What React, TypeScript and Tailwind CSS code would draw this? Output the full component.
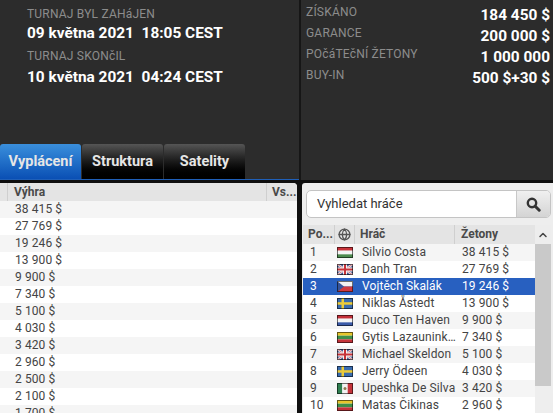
import React from 'react';
import { ChevronUp, Globe } from 'lucide-react';

type FlagCode = 'hu' | 'gb' | 'cz' | 'se' | 'nl' | 'lt' | 'mx';

const payouts = [
  '38 415 $', '27 769 $', '19 246 $', '13 900 $', '9 900 $', '7 340 $', '5 100 $',
  '4 030 $', '3 420 $', '2 960 $', '2 500 $', '2 100 $', '1 700 $',
];

const players: { name: string; flag: FlagCode; chips: string }[] = [
  { name: 'Silvio Costa', flag: 'hu', chips: '38 415 $' },
  { name: 'Danh Tran', flag: 'gb', chips: '27 769 $' },
  { name: 'Vojtěch Skalák', flag: 'cz', chips: '19 246 $' },
  { name: 'Niklas Åstedt', flag: 'se', chips: '13 900 $' },
  { name: 'Duco Ten Haven', flag: 'nl', chips: '9 900 $' },
  { name: 'Gytis Lazauninkas', flag: 'lt', chips: '7 340 $' },
  { name: 'Michael Skeldon', flag: 'gb', chips: '5 100 $' },
  { name: 'Jerry Ödeen', flag: 'se', chips: '4 030 $' },
  { name: 'Upeshka De Silva', flag: 'mx', chips: '3 420 $' },
  { name: 'Matas Čikinas', flag: 'lt', chips: '2 960 $' },
];

const stats = [
  ['ZÍSKÁNO', '184 450 $'],
  ['GARANCE', '200 000 $'],
  ['POčáTEčNÍ ŽETONY', '1 000 000'],
  ['BUY-IN', '500 $+30 $'],
];

const Flag: React.FC<{ code: FlagCode }> = ({ code }) => {
  const stripes: Record<string, string[]> = {
    hu: ['#c8333a', '#f4f4f4', '#4d8a4e'],
    nl: ['#c4303a', '#f4f4f4', '#3a5aa8'],
    lt: ['#e8c62c', '#3f8f4a', '#c4333a'],
  };
  return (
    <svg width="16" height="11" viewBox="0 0 16 11" className="block">
      {stripes[code] &&
        stripes[code].map((c, i) => (
          <rect key={i} x="0" y={(i * 11) / 3} width="16" height={11 / 3} fill={c} />
        ))}
      {code === 'cz' && (
        <>
          <rect width="16" height="5.5" fill="#f2f2f2" />
          <rect y="5.5" width="16" height="5.5" fill="#cf3a40" />
          <path d="M0 0L7 5.5L0 11Z" fill="#34549c" />
        </>
      )}
      {code === 'se' && (
        <>
          <rect width="16" height="11" fill="#3a6cae" />
          <rect x="4.5" width="2.5" height="11" fill="#eccb3a" />
          <rect y="4.2" width="16" height="2.5" fill="#eccb3a" />
        </>
      )}
      {code === 'gb' && (
        <>
          <rect width="16" height="11" fill="#4a5a94" />
          <path d="M0 0L16 11M16 0L0 11" stroke="#f2f2f2" strokeWidth="2.2" />
          <path d="M0 0L16 11M16 0L0 11" stroke="#c8404a" strokeWidth="0.7" />
          <rect x="6" width="4" height="11" fill="#f2f2f2" />
          <rect y="3.5" width="16" height="4" fill="#f2f2f2" />
          <rect x="7" width="2" height="11" fill="#c8333a" />
          <rect y="4.5" width="16" height="2" fill="#c8333a" />
        </>
      )}
      {code === 'mx' && (
        <>
          <rect width="5.3" height="11" fill="#2f7f50" />
          <rect x="5.3" width="5.4" height="11" fill="#f2f2f2" />
          <rect x="10.7" width="5.3" height="11" fill="#c4333a" />
          <circle cx="8" cy="5.5" r="1.5" fill="#8a7a50" />
        </>
      )}
      <rect x="0.5" y="0.5" width="15" height="10" fill="none" stroke="#000" strokeOpacity="0.55" />
    </svg>
  );
};

const SearchIcon = () => (
  <svg width="15" height="15" viewBox="0 0 15 15" className="block">
    <circle cx="6" cy="6" r="4.2" fill="none" stroke="#333333" strokeWidth="2.4" />
    <path d="M9.2 9.2L13.2 13.2" stroke="#333333" strokeWidth="3" strokeLinecap="round" />
  </svg>
);

const InfoLabel: React.FC<{ children: React.ReactNode }> = ({ children }) => (
  <div className="text-[12px] leading-[14px] tracking-[0.2px] text-[#8c8c8c]">{children}</div>
);

const tabClass =
  'flex h-[35px] items-center justify-center rounded-t-[3px] text-[14.5px] font-bold text-[#e6e6e6]';

export default function App() {
  return (
    <div
      className="flex h-[413px] w-[553px] flex-col overflow-hidden bg-[#0f0f0f] text-[12px]"
      style={{ fontFamily: 'Roboto, sans-serif' }}
    >
      {/* Top info */}
      <div className="flex h-[180px] shrink-0 bg-[#2c2c2c]">
        <div className="flex w-[299px] shrink-0 flex-col">
          <div className="flex-1 pl-[27px] pt-[7px]">
            <InfoLabel>TURNAJ BYL ZAHáJEN</InfoLabel>
            <div className="mt-[1px] whitespace-pre text-[15.4px] font-bold leading-[22px] text-white">
              09 května 2021  18:05 CEST
            </div>
            <div className="mt-[5px]">
              <InfoLabel>TURNAJ SKONčIL</InfoLabel>
            </div>
            <div className="mt-[3px] whitespace-pre text-[15.4px] font-bold leading-[22px] text-white">
              10 května 2021  04:24 CEST
            </div>
          </div>
          <div className="flex h-[36px] border-b border-[#1f5fb8]">
            <div className={`${tabClass} w-[81px] bg-gradient-to-b from-[#3a8fdc] to-[#0a4fb4]`}>
              Vyplácení
            </div>
            <div className={`${tabClass} ml-px w-[81px] bg-gradient-to-b from-[#555555] via-[#1a1a1a] to-black`}>
              Struktura
            </div>
            <div className={`${tabClass} ml-px w-[81px] bg-gradient-to-b from-[#555555] via-[#1a1a1a] to-black`}>
              Satelity
            </div>
          </div>
        </div>
        <div className="w-[2px] shrink-0 bg-[#161616]" />
        <div className="flex flex-1 flex-col pl-[5px] pr-[3px] pt-[5px]">
          {stats.map(([label, value]) => (
            <div key={label} className="flex h-[21px] items-start justify-between">
              <span className="text-[12px] leading-[14px] tracking-[0.2px] text-[#8c8c8c]">{label}</span>
              <span className="text-[15.4px] font-bold leading-[20px] text-white">{value}</span>
            </div>
          ))}
        </div>
      </div>

      <div className="flex min-h-0 flex-1 pt-[3px]">
        {/* Payout table */}
        <div className="w-[297px] shrink-0 overflow-hidden rounded-tr-[4px] bg-white">
          <div className="flex h-[18px] bg-[#e4e4e4] text-[12px] font-bold leading-[18px] text-[#4a4a4a]">
            <div className="w-[8px] border-r border-[#cfcfcf]" />
            <div className="flex-1 border-r border-[#cfcfcf] pl-[6px]">Výhra</div>
            <div className="w-[30px] pl-[5px]">Vs...</div>
          </div>
          {payouts.map((p, i) => (
            <div
              key={i}
              className={`h-[17px] pl-[15px] text-[12px] leading-[17px] tracking-[0.1px] text-[#444444] ${
                i % 2 === 0 ? 'bg-[#f5f5f5]' : 'bg-white'
              }`}
            >
              {p}
            </div>
          ))}
        </div>

        <div className="w-[5px] shrink-0" />

        {/* Player list */}
        <div className="flex min-w-0 flex-1 flex-col rounded-tl-[3px] bg-[#eeeeee]">
          <div className="pl-[4px] pr-[2px] pt-[7px]">
            <div className="flex h-[28px] overflow-hidden rounded-[5px] border border-[#c4c4c4] bg-white">
              <div className="flex-1 pl-[10px] text-[13px] leading-[26px] text-[#333333]">Vyhledat hráče</div>
              <div className="flex w-[34px] items-center justify-center border-l border-[#c8c8c8] bg-gradient-to-b from-[#f0f0f0] to-[#d4d4d4]">
                <SearchIcon />
              </div>
            </div>
          </div>
          <div className="mt-[7px] flex min-h-0 flex-1 pl-[1px]">
            <div className="w-[232px] shrink-0">
              <div className="flex h-[19px] bg-[#e4e4e4] text-[12px] font-bold leading-[18px] text-[#4a4a4a]">
                <div className="w-[32px] truncate border-r border-[#cfcfcf] pl-[5px]">Po...</div>
                <div className="flex w-[20px] items-center justify-center border-r border-[#cfcfcf]">
                  <Globe size={13} strokeWidth={2.4} className="text-[#555555]" />
                </div>
                <div className="w-[100px] border-r border-[#cfcfcf] pl-[5px]">Hráč</div>
                <div className="flex-1 pl-[6px]">Žetony</div>
              </div>
              {players.map((pl, i) => {
                const selected = i === 2;
                const rowClass = selected
                  ? 'bg-[#2860c0] text-white'
                  : i % 2 === 0
                    ? 'bg-[#f5f5f5] text-[#444444]'
                    : 'bg-white text-[#444444]';
                return (
                  <div
                    key={pl.name}
                    className={`flex h-[17px] items-center text-[12px] leading-[17px] tracking-[0.1px] ${rowClass}`}
                  >
                    <div className="w-[32px] pl-[7px]">{i + 1}</div>
                    <div className="flex w-[20px] justify-center">
                      <Flag code={pl.flag} />
                    </div>
                    <div className="w-[102px] truncate pl-[7px]">{pl.name}</div>
                    <div className="flex-1 pl-[5px]">{pl.chips}</div>
                  </div>
                );
              })}
            </div>
            <div className="flex w-[16px] shrink-0 flex-col">
              <div className="flex h-[19px] items-center justify-center bg-[#ededed]">
                <ChevronUp size={12} strokeWidth={3} className="text-[#444444]" />
              </div>
              <div className="h-[142px] bg-[#c9c9c9]" />
            </div>
          </div>
        </div>
      </div>
    </div>
  );
}
